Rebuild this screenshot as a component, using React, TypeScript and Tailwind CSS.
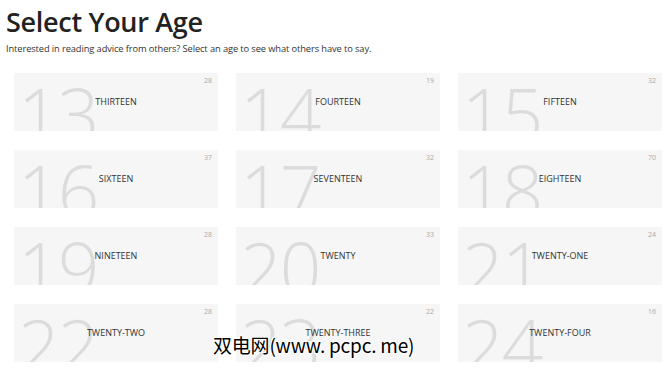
import React from 'react';

const ages = [
  { n: 13, label: 'THIRTEEN', count: 28 },
  { n: 14, label: 'FOURTEEN', count: 19 },
  { n: 15, label: 'FIFTEEN', count: 32 },
  { n: 16, label: 'SIXTEEN', count: 37 },
  { n: 17, label: 'SEVENTEEN', count: 32 },
  { n: 18, label: 'EIGHTEEN', count: 70 },
  { n: 19, label: 'NINETEEN', count: 28 },
  { n: 20, label: 'TWENTY', count: 33 },
  { n: 21, label: 'TWENTY-ONE', count: 24 },
  { n: 22, label: 'TWENTY-TWO', count: 28 },
  { n: 23, label: 'TWENTY-THREE', count: 22 },
  { n: 24, label: 'TWENTY-FOUR', count: 16 },
];

export default function App() {
  return (
    <div className="relative w-[670px] h-[370px] overflow-hidden bg-white font-['Open_Sans',sans-serif] text-[#222]">
      <h1 className="pl-[6px] pt-[5px] text-[27px] leading-[34px] font-semibold tracking-[-0.3px]">Select Your Age</h1>
      <p className="pl-[6px] mt-[3px] text-[9.3px] leading-[14px] text-[#333] tracking-[-0.1px]">
        Interested in reading advice from others? Select an age to see what others have to say.
      </p>

      <div className="grid grid-cols-3 gap-x-[18px] gap-y-[19px] pl-[14px] pr-[8px] pt-[17px]">
        {ages.map((a) => (
          <div key={a.n} className="relative h-[58px] bg-[#f6f6f6] overflow-hidden flex items-center justify-center">
            <span className="absolute left-[4px] top-[4px] text-[73px] leading-none font-light text-[#dcdcdc] tracking-[-2px]">
              {a.n}
            </span>
            <span className="absolute right-[6px] top-[3px] text-[7px] text-[#aaa]">{a.count}</span>
            <span className="relative text-[9px] text-[#333]">{a.label}</span>
          </div>
        ))}
      </div>

      {/* watermark */}
      <div
        className="absolute left-[213px] top-[331px] text-[19px] leading-[28px] text-black font-['Noto_Sans_CJK_SC',sans-serif] whitespace-pre tracking-[-0.2px]"
        style={{ textShadow: '1px 1px 0 #fff, -1px -1px 0 #fff, 1px -1px 0 #fff, -1px 1px 0 #fff' }}
      >
        双电网(www. pcpc. me)
      </div>
    </div>
  );
}
